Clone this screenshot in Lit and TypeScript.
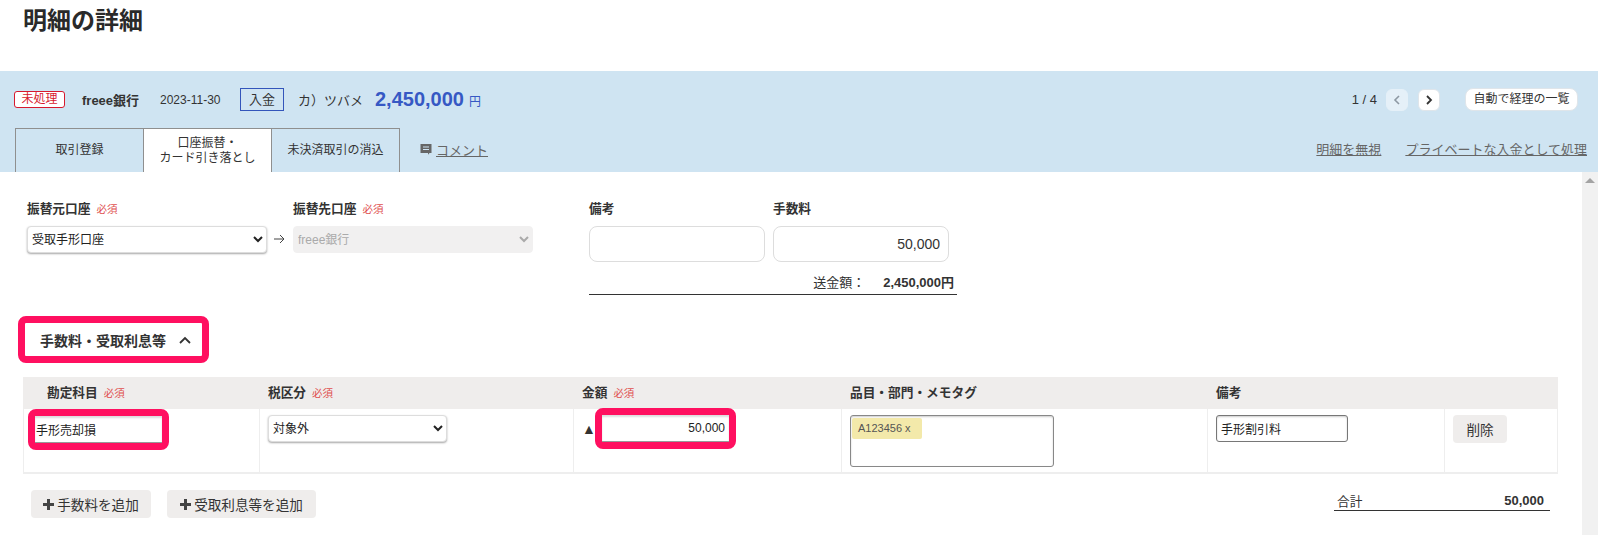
import { LitElement, html, css } from "lit";
import { customElement } from "lit/decorators.js";

const req = html`<span class="req">必須</span>`;

@customElement("app-root")
export class AppRoot extends LitElement {
  static styles = css`
    :host {
      display: block;
      width: 1598px;
      height: 535px;
      overflow: hidden;
      background: #fff;
      color: #333;
      font-family: "Liberation Sans", "Noto Sans CJK JP", sans-serif;
      font-size: 12px;
    }
    * { box-sizing: border-box; }
    h1 {
      margin: 0;
      height: 71px;
      padding: 0 0 0 23px;
      font-size: 24px;
      line-height: 41px;
      font-weight: 700;
      color: #2a2a2a;
    }
    .band { background: #cfe4f2; height: 101px; }
    .top {
      height: 57px;
      display: flex;
      align-items: center;
      padding: 0 20px 0 14px;
    }
    .badge {
      width: 51px;
      height: 17px;
      border: 1px solid #d7192e;
      border-radius: 3px;
      background: #fff;
      color: #d7192e;
      font-size: 12px;
      line-height: 15px;
      text-align: center;
    }
    .bank { margin-left: 17px; font-size: 13px; font-weight: 700; width: 78px; }
    .date { width: 80px; }
    .kind {
      width: 44px;
      height: 23px;
      border: 1px solid #3355bb;
      color: #333;
      font-size: 13px;
      line-height: 21px;
      text-align: center;
    }
    .payee { margin-left: 14px; font-size: 13px; width: 77px; white-space: nowrap; }
    .amount { color: #3658c4; font-size: 20px; font-weight: 700; }
    .yen { color: #3658c4; margin-left: 5px; font-size: 12px; margin-top: 1px; }
    .pager { margin-left: auto; display: flex; align-items: center; }
    .pager .count { margin-right: 9px; font-size: 13px; }
    .nav {
      width: 22px;
      height: 22px;
      border-radius: 6px;
      display: flex;
      align-items: center;
      justify-content: center;
      background: #fff;
      border: 1px solid #dfe5ea;
    }
    .nav.off { background: #e5f0f8; border-color: #e5f0f8; margin-right: 10px; }
    .auto {
      margin-left: 25px;
      width: 113px;
      height: 23px;
      background: #fff;
      border: 1px solid #dfe5ea;
      border-radius: 8px;
      font-size: 12px;
      line-height: 21px;
      text-align: center;
    }
    .tabs {
      height: 44px;
      display: flex;
      align-items: stretch;
      padding: 0 11px 0 15px;
    }
    .tab {
      width: 129px;
      border: 1px solid #8f8f8f;
      border-bottom: 0;
      margin-right: -1px;
      display: flex;
      align-items: center;
      justify-content: center;
      text-align: center;
      line-height: 14.5px;
    }
    .tab.on { background: #fff; }
    .comment {
      margin-left: 21px;
      padding-bottom: 2px;
      display: flex;
      align-items: center;
      gap: 4px;
      font-size: 13px;
      color: #666;
    }
    .link { color: #666; font-size: 13px; text-decoration: underline; }
    .links { margin-left: auto; padding-bottom: 3px; display: flex; align-items: center; gap: 24px; }
    .body { display: flex; height: 363px; }
    .main { flex: 1; min-width: 0; }
    .bar { width: 16px; background: #f1f1f1; padding: 6px 0 0 3px; }
    .bar i {
      display: block;
      width: 0;
      height: 0;
      border: 5px solid transparent;
      border-top: 0;
      border-bottom: 5px solid #a3a3a3;
    }
    .form { display: flex; padding: 28px 0 0 27px; }
    .field { display: flex; flex-direction: column; gap: 8px; }
    .label { height: 18px; line-height: 18px; font-size: 12.7px; font-weight: 700; white-space: nowrap; }
    .req { color: #e0504f; font-size: 10.5px; font-weight: 400; margin-left: 6px; }
    select {
      font: inherit;
      font-size: 12px;
      color: #222;
      background: #fff;
      border: 1px solid #ddd;
      border-radius: 4px;
      box-shadow: 0 1px 2px rgba(0, 0, 0, 0.35);
      padding: 0;
      height: 27px;
      outline: none;
    }
    select:disabled { background: #f1f0f0; color: #aaa; box-shadow: none; border-color: #f1f0f0; opacity: 1; }
    .from select { width: 240px; }
    .to select { width: 240px; }
    .arrow { margin: 33px 8px 0 7px; width: 11px; height: 12px; }
    .memo { margin-left: 56px; width: 368px; }
    .memo-grid { display: grid; grid-template-columns: 176px 176px; column-gap: 8px; }
    .box {
      height: 36px;
      width: 176px;
      border: 1px solid #ddd;
      border-radius: 8px;
      font: inherit;
      font-size: 14px;
      color: #333;
      padding: 0 8px;
      text-align: right;
      outline: none;
    }
    .sum {
      margin-top: 11px;
      height: 22px;
      border-bottom: 1px solid #333;
      display: flex;
      justify-content: flex-end;
      font-size: 13px;
      line-height: 19px;
      padding-right: 3px;
    }
    .sum b { margin-left: 18px; }
    .pink { border: 7px solid #ff1060; border-radius: 8px; background: #fff; }
    .toggle {
      margin: 21px 0 0 18px;
      width: 191px;
      height: 47px;
      display: flex;
      align-items: center;
      padding-left: 15px;
      font-size: 14px;
      font-weight: 700;
      gap: 13px;
    }
    .table { margin: 14px 0 0 23px; width: 1535px; }
    .cols { display: grid; grid-template-columns: 237px 314px 268px 366px 237px 113px; }
    .head { background: #efedec; height: 32px; }
    .head > div { font-size: 12.7px; font-weight: 700; line-height: 32px; padding-left: 8px; white-space: nowrap; }
    .head > div:first-child { padding-left: 24px; }
    .row {
      height: 65px;
      grid-template-columns: 236px 314px 268px 366px 237px 112px;
      border-bottom: 2px solid #eee;
      border-left: 1px solid #eee;
      border-right: 1px solid #eee;
    }
    .cell { border-right: 1px solid #eee; padding: 6px 8px 0; }
    .cell:last-child { border-right: 0; }
    .cell.acct { padding: 0 0 0 4px; }
    .cell.amt { padding: 0 0 0 8px; display: flex; align-items: flex-start; }
    .tri { width: 12px; margin-right: 1px; margin-top: 12px; font-size: 14px; line-height: 16px; color: #333; }
    .pink.small { width: 141px; height: 41px; display: block; }
    .amt .pink.small { margin-top: -1px; }
    .plain {
      width: 100%;
      height: 100%;
      border: 0;
      border-bottom: 1px solid #999;
      box-shadow: inset 0 2px 2px #ddd;
      font: inherit;
      font-size: 12px;
      color: #222;
      padding: 0 1px;
      outline: none;
    }
    .plain.num { text-align: right; padding-right: 4px; }
    .tax { width: 179px; display: block; }
    .tagbox {
      width: 204px;
      height: 52px;
      border: 1px solid #888;
      border-radius: 3px;
      box-shadow: inset 0 1px 2px #ccc;
      padding: 2px 0 0 1px;
    }
    .tag {
      display: inline-block;
      width: 70px;
      height: 21px;
      background: #f3e9aa;
      border-radius: 2px;
      font-size: 11px;
      line-height: 21px;
      color: #555;
      padding-left: 6px;
    }
    .note {
      display: block;
      width: 132px;
      height: 27px;
      border: 1px solid #777;
      border-radius: 3px;
      box-shadow: inset 0 1px 2px #ccc;
      font: inherit;
      font-size: 12px;
      color: #222;
      padding: 0 4px;
      outline: none;
    }
    .btn {
      display: inline-flex;
      align-items: center;
      justify-content: center;
      background: #efedec;
      border-radius: 4px;
      font-size: 13.6px;
      color: #333;
    }
    .del { width: 54px; height: 28px; }
    .foot { display: flex; align-items: flex-start; padding: 16px 32px 0 31px; }
    .foot .btn { height: 28px; gap: 3px; }
    .add1 { width: 120px; }
    .add2 { width: 149px; margin-left: 16px; }
    .total {
      margin-left: auto;
      width: 216px;
      height: 21px;
      border-bottom: 1px solid #333;
      display: flex;
      justify-content: space-between;
      align-items: center;
      padding: 0 6px 0 3px;
      font-size: 12.7px;
    }
    .total b { font-size: 13px; }
  `;

  render() {
    const plus = html`<svg width="11" height="11" viewBox="0 0 11 11"><path d="M4 0h3v4h4v3H7v4H4V7H0V4h4z" fill="#444"/></svg>`;
    return html`
      <h1>明細の詳細</h1>
      <div class="band">
        <div class="top">
          <span class="badge">未処理</span>
          <span class="bank">freee銀行</span>
          <span class="date">2023-11-30</span>
          <span class="kind">入金</span>
          <span class="payee">カ）ツバメ</span>
          <span class="amount">2,450,000</span>
          <span class="yen">円</span>
          <div class="pager">
            <span class="count">1 / 4</span>
            <span class="nav off"><svg width="8" height="10" viewBox="0 0 8 10"><path d="M6 1L2 5l4 4" fill="none" stroke="#8d98a3" stroke-width="1.6"/></svg></span>
            <span class="nav"><svg width="8" height="10" viewBox="0 0 8 10"><path d="M2 1l4 4-4 4" fill="none" stroke="#333" stroke-width="1.8"/></svg></span>
            <span class="auto">自動で経理の一覧</span>
          </div>
        </div>
        <div class="tabs">
          <div class="tab">取引登録</div>
          <div class="tab on">口座振替・<br />カード引き落とし</div>
          <div class="tab">未決済取引の消込</div>
          <div class="comment">
            <svg width="12" height="12" viewBox="0 0 12 12"><path d="M0.5 1h11v9H9.5L8 11.8V10H0.5z" fill="#666"/><path d="M3 4h6M3 6.5h6" stroke="#cfe4f2" stroke-width="1"/></svg>
            <span class="link">コメント</span>
          </div>
          <div class="links">
            <span class="link">明細を無視</span>
            <span class="link">プライベートな入金として処理</span>
          </div>
        </div>
      </div>
      <div class="body">
        <div class="main">
          <div class="form">
            <div class="field from">
              <div class="label">振替元口座${req}</div>
              <select><option>受取手形口座</option></select>
            </div>
            <svg class="arrow" viewBox="0 0 11 12"><path d="M0 6h10M6 2l4 4-4 4" fill="none" stroke="#444" stroke-width="1"/></svg>
            <div class="field to">
              <div class="label">振替先口座${req}</div>
              <select disabled><option>freee銀行</option></select>
            </div>
            <div class="memo">
              <div class="memo-grid">
                <div class="field"><div class="label">備考</div><input class="box" value="" /></div>
                <div class="field"><div class="label">手数料</div><input class="box" value="50,000" /></div>
              </div>
              <div class="sum"><span>送金額：</span><b>2,450,000円</b></div>
            </div>
          </div>
          <div class="toggle pink">
            <span>手数料・受取利息等</span>
            <svg width="12" height="8" viewBox="0 0 12 8"><path d="M1 7l5-5 5 5" fill="none" stroke="#333" stroke-width="1.8"/></svg>
          </div>
          <div class="table">
            <div class="cols head">
              <div>勘定科目${req}</div>
              <div>税区分${req}</div>
              <div>金額${req}</div>
              <div>品目・部門・メモタグ</div>
              <div>備考</div>
              <div></div>
            </div>
            <div class="cols row">
              <div class="cell acct"><span class="pink small"><input class="plain" value="手形売却損" /></span></div>
              <div class="cell"><select class="tax"><option>対象外</option></select></div>
              <div class="cell amt"><span class="tri">▲</span><span class="pink small"><input class="plain num" value="50,000" /></span></div>
              <div class="cell"><div class="tagbox"><span class="tag">A123456 x</span></div></div>
              <div class="cell"><input class="note" value="手形割引料" /></div>
              <div class="cell"><span class="btn del">削除</span></div>
            </div>
          </div>
          <div class="foot">
            <span class="btn add1">${plus}手数料を追加</span>
            <span class="btn add2">${plus}受取利息等を追加</span>
            <div class="total"><span>合計</span><b>50,000</b></div>
          </div>
        </div>
        <div class="bar"><i></i></div>
      </div>
    `;
  }
}
